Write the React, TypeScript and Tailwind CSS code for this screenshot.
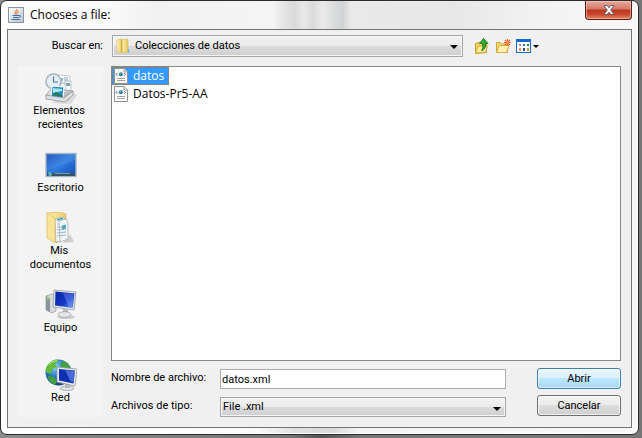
import { useState } from "react";
import type { ReactNode } from "react";

function JavaIcon() {
  return (
    <svg viewBox="0 0 16 16" className="h-4 w-4" aria-hidden="true">
      <defs>
        <linearGradient id="javaTile" x1="0" y1="0" x2="1" y2="1">
          <stop offset="0" stopColor="#fff" />
          <stop offset="1" stopColor="#b9c4cd" />
        </linearGradient>
      </defs>
      <rect x=".5" y=".5" width="15" height="15" fill="url(#javaTile)" stroke="#8a959f" />
      <path d="M8.600 2C9.400 4 6.300 4.600 7.200 6.200l.9 1.300M10.400 4.300C8.800 5 8.500 6 9.300 7.400" fill="none" stroke="#ed7d31" strokeWidth="1.100" />
      <path d="M4.500 8.500h6.500M5 10.500h5.500M3.500 12.500h8.500M11 8.500c2.300-.4 2 1.600-.2 2" fill="none" stroke="#3f6f9d" />
    </svg>
  );
}

function FolderIcon() {
  return (
    <svg viewBox="0 0 16 16" className="h-4 w-4" aria-hidden="true">
      <defs>
        <linearGradient id="folderLeaf" x1="0" y1="0" x2="1" y2="0">
          <stop offset="0" stopColor="#fff5b8" />
          <stop offset="1" stopColor="#e5c558" />
        </linearGradient>
      </defs>
      <path d="M2 2l5-1v13l-2 1-3-2z" fill="url(#folderLeaf)" stroke="#dfbd55" strokeWidth=".6" />
      <path d="M7 2l5-1 1 1v12l-6 1z" fill="url(#folderLeaf)" stroke="#d5b24a" strokeWidth=".6" />
      <path d="M6.700 3v11" stroke="#c39b30" strokeWidth=".7" />
      <path d="M13.500 11v4" stroke="#73b9e8" strokeWidth="1.200" />
    </svg>
  );
}

function XmlIcon() {
  return (
    <svg viewBox="0 0 14 16" className="h-4 w-3.5 shrink-0" aria-hidden="true">
      <path d="M.5.500h9.500l3.500 3.500v11.500H.5z" fill="#fdfdfd" stroke="#929292" />
      <path d="M10 .5v3.500h3.500" fill="#ddd" stroke="#a2a2a2" />
      <path d="M3.500 4.800L2 6.300l1.500 1.500M10 4.800l1.500 1.500L10 7.800" fill="none" stroke="#555e80" />
      <circle cx="6.800" cy="6.300" r="2" fill="#247c91" />
      <circle cx="6.300" cy="5.700" r=".8" fill="#71cbb0" />
      <path d="M3 10.500h8M3 12.500h8" stroke="#a0a0aa" />
    </svg>
  );
}

function UpFolderIcon() {
  return (
    <svg viewBox="0 0 16 16" className="h-4 w-4" aria-hidden="true">
      <path d="M1.500 5.500l4-1 1 1h6v9l-11 1z" fill="#f4d668" stroke="#c99b2c" />
      <path d="M1.500 15l2.500-7h9.500l-2 6.500z" fill="#fff0a0" stroke="#d3a637" />
      <path d="M9.500.5l4.500 5h-2.500c.3 4-.6 6-4 7.300 1.600-2.300 1.500-4.300 1-7.300H5.500z" fill="#32ad32" stroke="#187818" strokeWidth=".9" />
    </svg>
  );
}

function NewFolderIcon() {
  return (
    <svg viewBox="0 0 16 16" className="h-4 w-4" aria-hidden="true">
      <path d="M1.500 4.500h4l1 1.500h6v8.500h-11z" fill="#f5d96e" stroke="#d0a33b" />
      <path d="M1.500 14.500l2.500-7h10l-2.500 7z" fill="#fff3ad" stroke="#d8ae48" />
      <path d="M12.500 1v7M9 4.500h7M10 2l5 5M15 2l-5 5" stroke="#f0552e" strokeWidth="1.100" />
      <circle cx="12.500" cy="4.500" r="1.500" fill="#ffa53b" />
    </svg>
  );
}

function ViewIcon() {
  return (
    <svg viewBox="0 0 15 14" className="h-3.5 w-[15px]" aria-hidden="true">
      <rect x=".5" y=".5" width="14" height="13" fill="#fff" stroke="#146bcd" />
      <path d="M0 0h15v3H0z" fill="#1269d0" />
      <path d="M3 5h2v2H3z" fill="#a48ab8" />
      <path d="M7 5h2v2H7z" fill="#2878d0" />
      <path d="M11 5h2v2h-2z" fill="#198d35" />
      <path d="M3 9h2v3H3z" fill="#ff8a61" />
      <path d="M7 9h2v3H7z" fill="#174c9f" />
      <path d="M11 9h2v3h-2z" fill="#c99516" />
    </svg>
  );
}

function RecentIcon() {
  return (
    <svg viewBox="0 0 32 32" className="h-8 w-8" aria-hidden="true">
      <defs>
        <linearGradient id="tray" x1="0" y1="0" x2="1" y2="1">
          <stop offset="0" stopColor="#f5f5f5" />
          <stop offset="1" stopColor="#989ca0" />
        </linearGradient>
      </defs>
      <path d="M6 31l20 1 6-9-3-2z" fill="#c9c9c9" opacity=".6" />
      <path d="M13 3l12 1-1 17H13z" fill="#fff" stroke="#b3b8bd" strokeWidth=".7" />
      <path d="M15 6h3v3h-3z" fill="#7bbedb" />
      <path d="M19 6h4M19 8h4M16 11h7" stroke="#8ba9b8" />
      <circle cx="8.500" cy="9.500" r="7.500" fill="#e4eff5" stroke="#a6b4bf" strokeWidth="1.500" />
      <path d="M8.500 4.500v5.500H13" fill="none" stroke="#58778e" strokeWidth="1.200" />
      <path d="M20 9h6v13h-6z" fill="#f6f9fb" stroke="#9faab3" strokeWidth=".7" />
      <path d="M21 11h4v3h-4z" fill="#7ea3b8" />
      <path d="M1 23l6-7 21 3-5 9-20-1z" fill="url(#tray)" stroke="#979ca1" strokeWidth=".8" />
      <path d="M7 14l12 1-1 11-12-1z" fill="#258bc4" stroke="#fff" strokeWidth="1.200" />
      <path d="M8 16l9 1v2l-9 2z" fill="#a5e5fa" />
      <path d="M7 23l4-3 7 4v1z" fill="#2a7952" />
      <path d="M1 23l18 3 9-7v4l-8 7-19-3z" fill="#dfe1e2" stroke="#888e92" strokeWidth=".7" />
    </svg>
  );
}

function DesktopIcon() {
  return (
    <svg viewBox="0 0 32 32" className="h-8 w-8" aria-hidden="true">
      <defs>
        <linearGradient id="desk" x1="0" y1="0" x2="1" y2="1">
          <stop offset="0" stopColor="#1546b0" />
          <stop offset=".5" stopColor="#2e7be0" />
          <stop offset="1" stopColor="#1649b0" />
        </linearGradient>
      </defs>
      <rect x="1" y="4.500" width="30" height="23" fill="url(#desk)" stroke="#a7b7c4" strokeWidth="1.400" />
      <path d="M2 5h28v6L2 22z" fill="#8ec4ff" opacity=".17" />
      <path d="M2 24h28v3H2z" fill="#355365" />
      <path d="M10 24h15v1H10z" fill="#8499a3" />
      <circle cx="5" cy="25" r="2.200" fill="#2998d6" />
      <path d="M3.500 24.500H5v-2zM5 25v2l2-2z" fill="#e6b848" />
    </svg>
  );
}

function DocumentsIcon() {
  return (
    <svg viewBox="0 0 32 32" className="h-8 w-8" aria-hidden="true">
      <defs>
        <linearGradient id="docFolder" x1="0" y1="0" x2="1" y2="0">
          <stop offset="0" stopColor="#fff0ac" />
          <stop offset="1" stopColor="#edcd6d" />
        </linearGradient>
      </defs>
      <path d="M18 31l11-1-4-8z" fill="#aaa" opacity=".5" />
      <path d="M2 1l13-1 6 2v25l-10 4z" fill="url(#docFolder)" stroke="#d5b65e" strokeWidth=".7" />
      <path d="M10 7l9-2v23l-8 2z" fill="#f9fcfd" stroke="#99a6ad" strokeWidth=".7" />
      <path d="M12 8l6-1.500" stroke="#3ba1ad" strokeWidth="1.500" />
      <path d="M14 9l7-2c2 2 2 4 2 7v13l-8 3z" fill="#eff4f6" stroke="#99a6ad" strokeWidth=".7" />
      <path d="M12 12h2M12 15h5M12 18l9-1M12 21l9-1M12 24l9-1" stroke="#9fb1c4" />
      <path d="M17 13.500l4-1v4l-4 1z" fill="#55a6bd" />
      <path d="M2 1l8 5v25l-8-5z" fill="#f8e499" stroke="#dbbd63" strokeWidth=".7" />
    </svg>
  );
}

function ComputerIcon() {
  return (
    <svg viewBox="0 0 32 32" className="h-8 w-8" aria-hidden="true">
      <defs>
        <linearGradient id="pcScreen" x1="0" y1="0" x2="1" y2="1">
          <stop offset="0" stopColor="#0724a3" />
          <stop offset=".6" stopColor="#1639c6" />
          <stop offset="1" stopColor="#75a5ff" />
        </linearGradient>
      </defs>
      <ellipse cx="21" cy="28" rx="9" ry="2" fill="#bbb" opacity=".7" />
      <path d="M1 7l6-2 4 2v15l-4 2-6-3z" fill="#d7dadd" stroke="#8f969c" strokeWidth=".7" />
      <path d="M1 7l4 2v14l-4-2z" fill="#8b9499" />
      <path d="M2 9l2 1" stroke="#8cec5a" strokeWidth="2" />
      <path d="M9 1l22 2-2 18-21-3z" fill="#e1e5e8" stroke="#979da3" strokeWidth=".8" />
      <path d="M10.500 2.500l19 2-1.700 14.500-17.800-2.500z" fill="url(#pcScreen)" />
      <path d="M18 4l11 1-2 13-4-1z" fill="#8daeff" opacity=".35" />
      <path d="M18 20l5 1v4h-5z" fill="#adb3b8" />
      <ellipse cx="19.500" cy="25.500" rx="6.500" ry="2.800" fill="#e5e7e9" stroke="#a2a7ac" strokeWidth=".8" />
    </svg>
  );
}

function NetworkIcon() {
  return (
    <svg viewBox="0 0 32 32" className="h-8 w-8" aria-hidden="true">
      <defs>
        <radialGradient id="globe" cx=".38" cy=".28" r=".75">
          <stop offset="0" stopColor="#8bd4f6" />
          <stop offset=".5" stopColor="#2878bf" />
          <stop offset="1" stopColor="#123f78" />
        </radialGradient>
      </defs>
      <circle cx="13.500" cy="13.500" r="13" fill="url(#globe)" />
      <path d="M3 6c4-6 9-6 11-5l-4 4 2 3-5 2-1 5-5-2C0 10 1 8 3 6z" fill="#64bc3c" />
      <path d="M18 2c4 1 6 4 7 7l-7 1-3-5zM3 17l6 1 3 4-2 4c-4-2-7-5-7-9z" fill="#43a239" />
      <path d="M4 6c3-4 6-4 8-4" stroke="#c6f29c" fill="none" />
      <ellipse cx="22" cy="29.300" rx="7" ry="2.300" fill="#e1e4e7" stroke="#9fa4aa" strokeWidth=".8" />
      <path d="M20 25h5v4h-5z" fill="#b4b9be" />
      <path d="M12 8l20 2-2 17-18-4z" fill="#e9ecef" stroke="#969ca2" strokeWidth=".8" />
      <path d="M14 10l16 1.500-1.500 13-14.500-3z" fill="#0d2fb1" />
      <path d="M20 11l10 1-1.500 11-3-.5z" fill="#6e93ee" opacity=".6" />
    </svg>
  );
}

function Caret({ className }: { className: string }) {
  return (
    <svg viewBox="0 0 8 4" className={className} aria-hidden="true">
      <path d="M0 0h8L4 4z" fill="#000" />
    </svg>
  );
}

const places: { id: string; label: ReactNode; icon: ReactNode }[] = [
  { id: "recent", label: <>Elementos&nbsp;<br />recientes</>, icon: <RecentIcon /> },
  { id: "desktop", label: "Escritorio", icon: <DesktopIcon /> },
  { id: "documents", label: <>Mis&nbsp;<br />documentos</>, icon: <DocumentsIcon /> },
  { id: "computer", label: "Equipo", icon: <ComputerIcon /> },
  { id: "network", label: "Red", icon: <NetworkIcon /> },
];

const files = ["datos", "Datos-Pr5-AA"];

const comboFace =
  "w-full appearance-none border border-[#a5a8ad] bg-[linear-gradient(#f2f2f2_0%,#ebebeb_48%,#dcdcdc_50%,#cfcfcf_100%)] text-black outline-none shadow-[inset_0_0_0_1px_#f5f5f5]";

export default function App() {
  const [selected, setSelected] = useState("datos");
  const [name, setName] = useState("datos.xml");

  return (
    <div className="flex min-h-screen bg-[linear-gradient(90deg,#8b8b8b,#777_45%,#555_50%,#777_56%,#777)] pr-[3px] pb-[3px] font-[Roboto,sans-serif] text-[11px] leading-[14px] text-black">
      <div className="flex flex-1 flex-col rounded-[7px] border border-[#2f292d] bg-[linear-gradient(90deg,#fff_0%,#fafafa_40%,#e0e2e2_46%,#d8dada_52%,#f3f3f3_56%,#f5f5f5_80%,#f7f7f7_100%)] px-1.5 pb-1.5 shadow-[inset_0_0_0_1px_#fff]">
        <header className="flex h-7 items-start justify-between bg-[linear-gradient(90deg,#fdfdfd_0%,#fafafa_16%,#f1f1f1_24%,#f5f5f5_42.5%,#e7e7e7_44%,#d9dada_46%,#e9e9e9_47.5%,#d9dada_49%,#ebebeb_50.500%,#d8dadb_52.500%,#d1d4d6_53.800%,#e9e9e9_55%,#e8e8e8_72%,#f3f3f3_86%,#f7f7f7_100%)]">
          <h1 className="flex items-center gap-1.5 pt-1.5 pl-px font-['Open_Sans',sans-serif] text-[12px] leading-4 font-normal">
            <JavaIcon />
            Chooses a file:
          </h1>
          <button
            type="button"
            aria-label="Cerrar"
            className="flex h-[19px] w-[47px] items-center justify-center rounded-b-[4px] border border-t-0 border-[#561d19] bg-[linear-gradient(#e8aa9f_0%,#d47766_45%,#bb3622_50%,#c9482f_75%,#e58a66_100%)] shadow-[inset_0_0_0_1px_rgba(255,220,205,0.45)]"
          >
            <svg viewBox="0 0 12 10" className="h-2.5 w-3" aria-hidden="true">
              <path d="M1 .500h3l2 2.300L8 .500h3L7.700 5l3.300 4.500H8L6 7.200 4 9.500H1L4.300 5z" fill="#fff" stroke="#555f69" strokeWidth=".9" />
            </svg>
          </button>
        </header>

        <main className="flex flex-1 flex-col gap-[9px] border border-[#73766f] bg-[#f0f0f0] px-2.5 pt-[5px] pb-2.5">
          <div className="flex h-[22px] items-center gap-[9px]">
            <label htmlFor="folder" className="w-[85px] text-right">Buscar en:</label>
            <div className="relative flex flex-1">
              <select id="folder" className={`${comboFace} h-[22px] pl-[22px]`}>
                <option>Colecciones de datos</option>
              </select>
              <span className="pointer-events-none absolute top-[3px] left-[3px]"><FolderIcon /></span>
              <Caret className="pointer-events-none absolute top-[10px] right-[5px] h-1 w-2" />
            </div>
            <div className="flex w-[149px] items-center gap-[5px] pl-[2px]">
              <button type="button" aria-label="Subir un nivel"><UpFolderIcon /></button>
              <button type="button" aria-label="Crear carpeta"><NewFolderIcon /></button>
              <button type="button" aria-label="Ver" className="flex items-center gap-0.5">
                <ViewIcon />
                <Caret className="h-[3px] w-1.5" />
              </button>
            </div>
          </div>

          <div className="flex flex-1 gap-2">
            <nav className="flex w-[85px] flex-col bg-[#f4f4f4] pt-px">
              {places.map((place) => (
                <button key={place.id} type="button" className="flex h-[70px] flex-col items-center justify-center">
                  {place.icon}
                  <span>{place.label}</span>
                </button>
              ))}
            </nav>

            <div className="flex flex-1 flex-col gap-[7px]">
              <ul className="flex flex-1 flex-col items-start border border-[#828790] bg-white font-['Open_Sans',sans-serif] text-[12px]">
                {files.map((file) => (
                  <li key={file}>
                    <button
                      type="button"
                      onClick={() => setSelected(file)}
                      className={`flex h-[18px] items-center gap-[5px] border border-dotted pr-1 pl-px leading-4 ${
                        file === selected ? "border-[#cc7022] bg-[#3399ff] text-white" : "border-transparent"
                      }`}
                    >
                      <XmlIcon />
                      {file}
                    </button>
                  </li>
                ))}
              </ul>

              <form className="flex gap-[31px]" onSubmit={(event) => event.preventDefault()}>
                <div className="grid flex-1 grid-cols-[109px_1fr] gap-y-2 pt-px">
                  <label htmlFor="file-name" className="pt-0.5">Nombre de archivo:</label>
                  <input
                    id="file-name"
                    value={name}
                    onChange={(event) => setName(event.target.value)}
                    className="h-5 border border-[#abadb3] bg-white px-px outline-none"
                  />
                  <label htmlFor="file-type" className="pt-0.5">Archivos de tipo:</label>
                  <div className="relative flex">
                    <select id="file-type" className={`${comboFace} h-5 pl-0.5`}>
                      <option>File .xml</option>
                    </select>
                    <Caret className="pointer-events-none absolute top-[10px] right-[5px] h-1 w-2" />
                  </div>
                </div>
                <div className="flex w-[84px] flex-col gap-1.5">
                  <button
                    type="submit"
                    className="h-[21px] rounded-[3px] border border-[#3c7fb1] bg-[linear-gradient(#eaf6fd_0%,#d9f0fc_48%,#bee6fd_50%,#a7d9f5_100%)] shadow-[inset_0_0_0_1px_rgba(255,255,255,0.6)]"
                  >
                    Abrir
                  </button>
                  <button
                    type="button"
                    className="h-[21px] rounded-[3px] border border-[#707070] bg-[linear-gradient(#f2f2f2_0%,#ebebeb_48%,#dddddd_50%,#cfcfcf_100%)] shadow-[inset_0_0_0_1px_rgba(255,255,255,0.7)]"
                  >
                    Cancelar
                  </button>
                </div>
              </form>
            </div>
          </div>
        </main>
      </div>
    </div>
  );
}
